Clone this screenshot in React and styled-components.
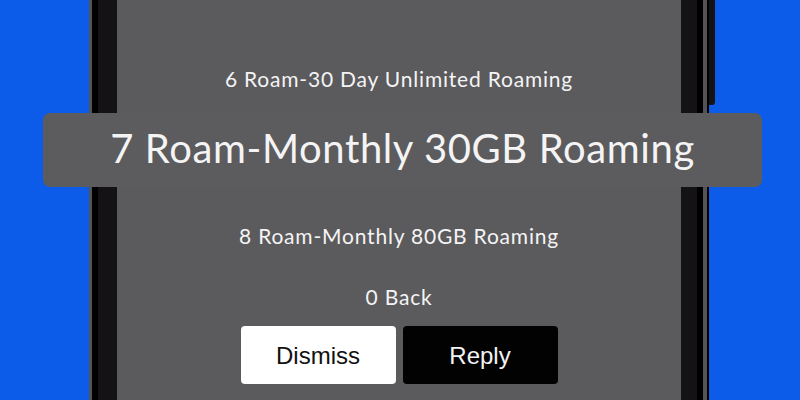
import React from 'react';
import styled, { createGlobalStyle } from 'styled-components';

const GlobalStyle = createGlobalStyle`
  html, body {
    margin: 0;
    padding: 0;
    background: #0c5ce9;
  }
  * {
    box-sizing: border-box;
  }
`;

const Page = styled.div`
  width: 800px;
  height: 400px;
  overflow: hidden;
  background: #0c5ce9;
  display: flex;
  justify-content: center;
  padding-right: 2px;
`;

const Phone = styled.div`
  position: relative;
  width: 620px;
  height: 400px;
  display: flex;
  background: #000;
  border-left: 3px solid #545356;
  border-right: 2px solid #000;
  box-shadow: inset -4px 0 0 #545356;

  &:after {
    content: '';
    position: absolute;
    top: 0;
    right: -8px;
    width: 6px;
    height: 105px;
    background: #141315;
    border-radius: 0 0 3px 0;
  }
`;

const Bezel = styled.div`
  flex: 1;
  margin: 0 10px 0 6px;
  padding: 0 16px 0 19px;
  background: #141214;
  display: flex;
`;

const Screen = styled.div`
  flex: 1;
  background: #5b5a5c;
  display: flex;
  flex-direction: column;
  align-items: center;
  padding-top: 66px;
  font-family: Lato, "Noto Sans", sans-serif;
  color: #f4f4f5;
`;

const Option = styled.div`
  font-size: 21px;
  letter-spacing: 0.8px;
  line-height: 1.2;
  margin-top: ${p => p.gap || 0}px;
  white-space: nowrap;
`;

const Selected = styled.div`
  margin: 22px -81px 0 -74px;
  align-self: stretch;
  height: 74px;
  padding-top: 11px;
  border-radius: 7px;
  background: #5c5b5d;
  display: flex;
  justify-content: center;
  font-size: 40px;
  letter-spacing: 0.6px;
  line-height: 1.2;
  white-space: nowrap;
`;

const Actions = styled.div`
  display: flex;
  gap: 7px;
  margin-top: 16px;
`;

const Button = styled.button`
  width: 155px;
  height: 58px;
  border: none;
  border-radius: 4px;
  background: ${p => (p.dark ? '#030203' : '#ffffff')};
  color: ${p => (p.dark ? '#f2f2f2' : '#111')};
  font-family: "Liberation Sans", Arial, sans-serif;
  font-size: 24px;
  padding: 2px 0 0;
`;

export default function App() {
  return (
    <>
      <GlobalStyle />
      <Page>
        <Phone>
          <Bezel>
            <Screen>
              <Option>6 Roam-30 Day Unlimited Roaming</Option>
              <Selected>7 Roam-Monthly 30GB Roaming</Selected>
              <Option gap={36}>8 Roam-Monthly 80GB Roaming</Option>
              <Option gap={36}>0 Back</Option>
              <Actions>
                <Button>Dismiss</Button>
                <Button dark>Reply</Button>
              </Actions>
            </Screen>
          </Bezel>
        </Phone>
      </Page>
    </>
  );
}
